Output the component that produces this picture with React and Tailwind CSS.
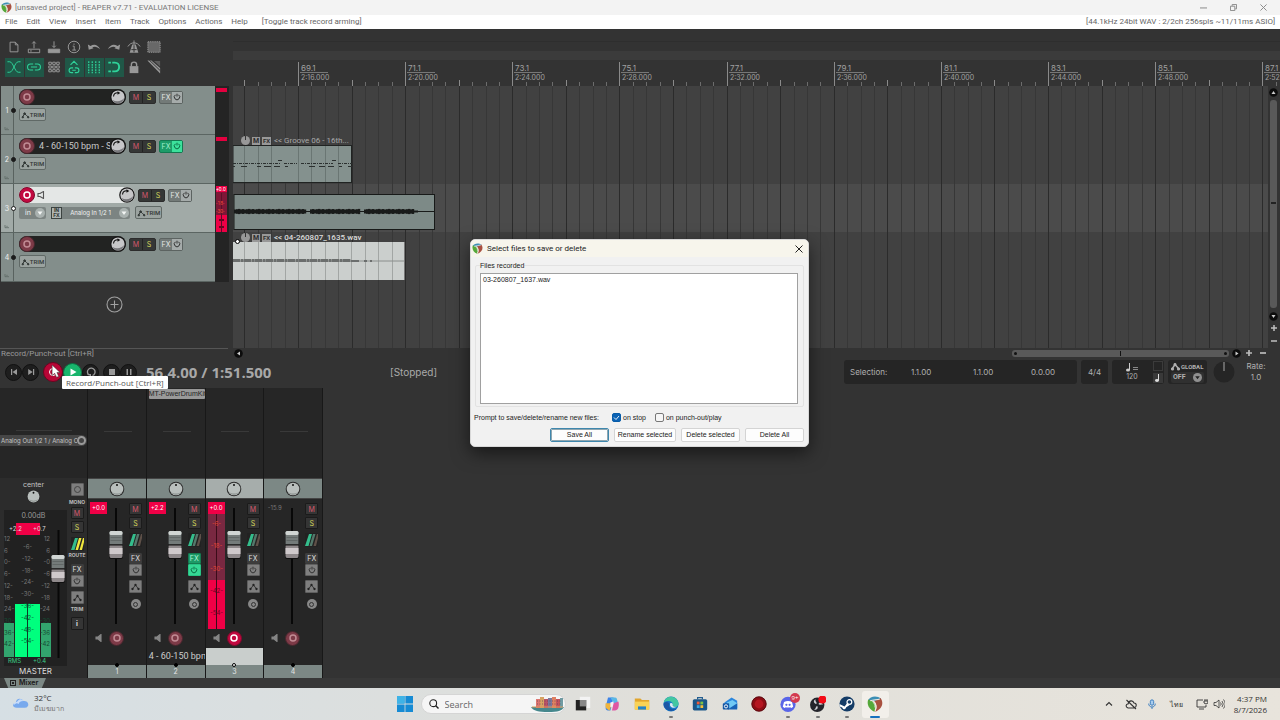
import React from "react";

const MAJORS = Array.from({ length: 10 }, (_, i) => ({
  x: Math.round(65 + i * 107.15),
  bar: `${69 + i * 2}.1`,
  time: `2:${String(16 + i * 4).padStart(2, "0")}.000`,
}));
const GRID = Array.from({ length: 88 }, (_, i) => ({
  x: Math.round(65 - 107.15 + i * 13.394),
  kind: i % 8 === 0 ? 2 : i % 4 === 0 ? 1 : 0,
}));

function ReaperLogo({ className }) {
  return (
    <svg viewBox="0 0 16 16" className={className} aria-hidden="true">
      <path d="M1 4.500C3 .2 10 -.8 14 2.800L10 5.500L4 5Z" fill="#3d8fb5" />
      <path d="M1.200 3.500C-.5 8.500 2 13.500 7.500 15.800L8.500 12C8.500 8.500 7 5.500 3.500 4.500Z" fill="#55a83a" />
      <path d="M13.500 2C17.500 7 14.500 13.500 8 15.800C10.500 12 10 8 7 5.500C9 4 12 4 13.500 2Z" fill="#a9503f" />
      <path d="M3.200 4.800C6.500 3.600 10 3.800 12.800 2.900M6.300 5C9.300 7.500 9.600 11.500 8 14.500" fill="none" stroke="#efe9e0" strokeWidth="1.100" />
      <path d="M5 5.200C7.200 7 8 9 7.900 11.500" fill="none" stroke="#d8e3d2" strokeWidth=".8" />
    </svg>
  );
}

function Glyph({ children, className = "size-4", box = 16 }) {
  return (
    <svg viewBox={`0 0 ${box} ${box}`} className={className} fill="none" stroke="currentColor" strokeWidth="1.1" aria-hidden="true">
      {children}
    </svg>
  );
}

const TOOLS = [
  ["New project", false, <path d="M3.500 2.500H9.500L12.500 5.500V13.500H3.500ZM9.500 2.500V5.500H12.500" />],
  ["Open project", false, <><path d="M1.500 10.500H14.500V14.500H1.500ZM8 9.500V2M6 4L8 1.800L10 4" /><path d="M3.500 12.500H5.500" /></>],
  ["Save project", false, <><path d="M1.500 10.500H14.500V14.500H1.500Z" fill="currentColor" /><path d="M8 1.500V8M6 6.500L8 8.700L10 6.500" /></>],
  ["Project settings", false, <><circle cx="8" cy="8" r="6.600" /><path d="M6.500 7H8.200V11.500M6 11.500H10.300M8 4V5.500" /></>],
  ["Undo", false, <path d="M1 5L2 11L7.500 9.500L6 8.500C9 6.800 12 8 15 10.500C12.500 5.300 8 4 4 6.900Z" fill="currentColor" stroke="none" />],
  ["Redo", false, <path d="M15 5L14 11L8.500 9.500L10 8.500C7 6.800 4 8 1 10.500C3.500 5.300 8 4 12 6.900Z" fill="currentColor" stroke="none" />],
  ["Metronome", false, <><path d="M6 5H10L13 14.500H3Z" fill="currentColor" stroke="none" /><path d="M8 6V14M5 11H11" stroke="#333" /><path d="M8 .5V5M1 7.500C3 4.500 5 3.300 8 3.300C11 3.300 13 4.500 15 7.500" /></>],
  ["Ripple editing", false, <rect x="1" y="2" width="14" height="12" fill="#686868" strokeDasharray="1.500 1" />],
  ["Auto crossfade", true, <path d="M.5 2H3C7 2 9 14 13 14H15.500M.5 14H3C7 14 9 2 13 2H15.500" />],
  ["Item grouping", true, <path d="M7 4.500H4C-.5 4.500 -.5 11.500 4 11.500H7M9 4.500H12C16.500 4.500 16.500 11.500 12 11.500H9M4.500 8H11.500" strokeWidth="1.200" />],
  ["Grid settings", false, <path d="M2 2.500H5V5H2ZM6.500 2.500H9.500V5H6.500ZM11 2.500H14V5H11ZM2 6.800H5V9.300H2ZM6.500 6.800H9.500V9.300H6.500ZM11 6.800H14V9.300H11ZM2 11H5V13.500H2ZM6.500 11H9.500V13.500H6.500ZM11 11H14V13.500H11Z" />],
  ["Envelope grouping", true, <path d="M4 5.500L8 1.500L12 5.500M7 9H5C1.500 9 1.500 14.500 5 14.500H7M9 9H11C14.500 9 14.500 14.500 11 14.500H9M6 11.700H10" strokeWidth="1.300" />],
  ["Show grid", true, <path d="M2 1.500V15M6 1.500V15M10 1.500V15M14 1.500V15" strokeWidth="1.400" strokeDasharray="2 1" />],
  ["Snap", true, <><path d="M6 3H9C15.500 3 15.500 13 9 13H6" strokeWidth="2.200" /><path d="M1.500 3H4.500M1.500 13H4.500" strokeWidth="2.200" /></>],
  ["Lock", false, <><rect x="3" y="7" width="10" height="8" fill="currentColor" stroke="none" /><path d="M5 7.500V5C5 1.500 11 1.500 11 5V7.500" strokeWidth="1.600" /></>],
  ["Edge grouping", false, <><path d="M.5 .5H5L15 9V15.500Z" fill="currentColor" stroke="none" /><path d="M2.500 0L15 12" stroke="#333" /><path d="M8 1H15V7.500Z" fill="currentColor" stroke="none" opacity=".4" /></>],
];

function Toolbar() {
  return (
    <div className="grid w-[164px] grid-cols-8 pt-2 pl-1">
      {TOOLS.map(([label, on, art]) => (
        <button key={label} type="button" aria-label={label} className="flex h-5 items-center justify-center">
          <span className={`flex h-[19px] w-[19px] items-center justify-center ${on ? "bg-[#205747] text-[#2fd39a]" : "text-[#989898]"}`}>
            <Glyph className="size-[14px]">{art}</Glyph>
          </span>
        </button>
      ))}
    </div>
  );
}

function RecordDot({ armed, className = "size-4" }) {
  return (
    <button type="button" aria-label="Record arm" className={`${className} flex shrink-0 items-center justify-center rounded-full border ${armed ? "border-[#7c0b2c] bg-[#c20840]" : "border-[#47262d] bg-[#7d3a47]"}`}>
      <svg viewBox="0 0 8 8" className="size-2" aria-hidden="true">
        <circle cx="4" cy="4" r="3" fill="none" stroke={armed ? "#fff" : "#c18b94"} strokeWidth="1.500" />
      </svg>
    </button>
  );
}

function Knob({ className = "size-4" }) {
  return (
    <svg viewBox="0 0 16 16" className={`${className} shrink-0`} role="img" aria-label="Pan">
      <circle cx="8" cy="8" r="7.800" fill="#161616" />
      <circle cx="8" cy="8" r="6.600" fill="#c6c6c8" />
      <path d="M2.500 11C5 16 13 15.500 14.300 9C12 12 7 13.500 2.500 11" fill="#77777b" />
      <path d="M3.500 7.500C3.800 5 5.500 3.700 8 3.800" fill="none" stroke="#111" strokeWidth="1.100" />
      <path d="M7.500 2.200L10.300 4L7.500 5.700Z" fill="#111" />
    </svg>
  );
}

function PanDial({ className = "size-4" }) {
  return (
    <svg viewBox="0 0 16 16" className={className} role="img" aria-label="Pan center">
      <circle cx="8" cy="8" r="7.300" fill="#2b2b2b" />
      <circle cx="8" cy="8" r="6.300" fill="#b9bfbd" />
      <path d="M3 11C6 13 10 13 13 11C11 14.500 5 14.500 3 11" fill="#8c9290" />
      <circle cx="8" cy="4" r="1" fill="#111" />
    </svg>
  );
}

function Power({ className = "size-2" }) {
  return (
    <Glyph className={className} box={8}>
      <path d="M2.500 1.800A2.700 2.700 0 1 0 5.500 1.800M4 .7V3.500" strokeWidth="1" />
    </Glyph>
  );
}

function TrimButton() {
  return (
    <button type="button" className="flex h-[13px] w-[27px] items-center justify-center rounded-[2px] border border-[#606966] bg-[#9aa29f] text-[#303634]">
      <Glyph className="h-2 w-[9px] shrink-0" box={9}><path d="M1 7L3.500 3L5.500 5L8 7" /><circle cx="3.500" cy="3" r="1" fill="currentColor" /><circle cx="1.500" cy="7" r=".8" fill="currentColor" /><circle cx="7.500" cy="7" r=".8" fill="currentColor" /></Glyph>
      <span className="font-['Roboto',sans-serif] text-[6px] leading-none font-medium">TRIM</span>
    </button>
  );
}

function TrackRow({ n, name, selected, fxOn }) {
  return (
    <div className={`flex h-[49px] border-b border-[#5b6562] ${selected ? "bg-[#a1aaa7]" : "bg-[#838e8b]"}`}>
      <div className="relative flex w-[13px] shrink-0 flex-col items-center justify-between border-r border-[#59625f] pt-[19px] pb-[3px]">
        <span className="text-[7px] leading-[11px] text-[#eef0ef]">{n}</span>
        <Glyph className="h-1 w-[6px] text-[#5b6562]" box={6}><path d="M0 0V4H6M2 2H4" /></Glyph>
        <span className={`absolute top-[22px] -right-[3px] size-[5px] rounded-full border border-[#1b1b1b] ${selected ? "bg-white" : "bg-[#1b1b1b]"}`} />
      </div>
      <div className="flex flex-col gap-[3px] pt-[3px] pl-[5px]">
        <div className="flex items-center gap-[3px]">
          <div className={`flex h-[16px] items-center rounded-full ${selected ? "w-[116px] bg-[#e4e7e6]" : "w-[107px] bg-[#222322]"}`}>
            <RecordDot armed={selected} />
            {selected && <Glyph className="ml-[2px] size-2 text-[#555]" box={8}><path d="M1 2.500H3L6.500 .5V7.500L3 5.500H1Z" /></Glyph>}
            <input aria-label={`Track ${n} name`} defaultValue={name} className={`min-w-0 flex-1 bg-transparent font-['Roboto',sans-serif] text-[9px] text-[#c8c8c8] outline-none ${selected ? "" : "pl-1"}`} />
            <Knob />
          </div>
          <div className="flex h-[13px] w-[27px] rounded-[2px] border border-[#2c2c2c] bg-[#353736] text-[7px] leading-[11px]">
            <button type="button" className="flex-1 border-r border-[#222] text-[#d5586c]">M</button>
            <button type="button" className="flex-1 text-[#d4d65a]">S</button>
          </div>
          <div className={`flex h-[13px] w-[24px] items-center rounded-[2px] border text-[7px] leading-[11px] ${fxOn ? "border-[#137951] bg-[#1d9c69] text-[#a1efcd]" : "border-[#5c6361] bg-[#737a78] text-[#e4e6e5]"}`}>
            <button type="button" className="flex-1">FX</button>
            <button type="button" aria-label="FX bypass" className={`flex h-full w-[10px] items-center justify-center ${fxOn ? "bg-[#3ce19c] text-[#0b6a42]" : "bg-[#a5abaa] text-[#333]"}`}><Power /></button>
          </div>
        </div>
        {selected ? (
          <div className="flex items-center gap-[5px]">
            <div className="flex h-[12px] w-[27px] items-center justify-between rounded-[2px] bg-[#7c8482] pr-px pl-[6px]">
              <button type="button" className="text-[7px] leading-none text-[#f0f2f1]">in</button>
              <Arrow />
            </div>
            <div className="flex h-[12px] w-[79px] items-center rounded-[2px] bg-[#7c8482] pr-px">
              <button type="button" className="h-full w-[11px] border border-[#3c4341] bg-[#adb4b2] text-[5px] leading-[5px] font-bold text-[#2c3230]">IN<br />FX</button>
              <button type="button" className="flex-1 text-[6px] leading-none text-[#f0f2f1]">Analog In 1/2 1</button>
              <Arrow />
            </div>
            <TrimButton />
          </div>
        ) : <TrimButton />}
      </div>
    </div>
  );
}

function Arrow() {
  return (
    <svg viewBox="0 0 10 10" className="size-[10px]" aria-hidden="true">
      <circle cx="5" cy="5" r="5" fill="#a9b1af" /><path d="M2.500 3.500H7.500L5 7Z" fill="#f4f6f5" />
    </svg>
  );
}

function Meters() {
  return (
    <div className="flex w-[14px] flex-col bg-[#242424]">
      {[1, 2, 3, 4].map((n) => (
        <div key={n} className="h-[49px] overflow-hidden pt-[2px] pl-px">
          {n < 3 && <div className="h-[4px] w-[11px] bg-[#e4003f]" />}
          {n === 3 && (
            <svg viewBox="0 0 11 46" className="h-[46px] w-[11px]" role="img" aria-label="Track 3 level">
              <rect width="11" height="46" fill="#7e1737" />
              <rect width="11" height="6" fill="#f00046" />
              <rect y="29" width="11" height="17" fill="#ee0046" />
              <path d="M5.500 7V46" stroke="#5b1029" />
              <g fontFamily="Roboto, sans-serif" fontSize="5"><text x="0" y="5" fill="#fff">+0.0</text><text x="0" y="19" fill="#ee4b36">-18-</text><text x="0" y="27" fill="#ee4b36">-30-</text></g>
              <path d="M3 34H8M3 41H8" stroke="#690522" strokeWidth="2" />
            </svg>
          )}
        </div>
      ))}
    </div>
  );
}

function ItemLabel({ children, bright }) {
  return (
    <div className={`flex items-center gap-[2px] pl-[8px] font-['Roboto',sans-serif] text-[8px] leading-[9px] whitespace-nowrap ${bright ? "font-medium text-[#dcdcdc]" : "text-[#a8a8a8]"}`}>
      <span className="flex size-[9px] justify-center rounded-full bg-[#989898]"><span className="h-1 w-px bg-[#333]" /></span>
      <span className="size-2 bg-[#989898] text-center text-[7px] leading-[8px] font-bold text-[#2c2c2c]">M</span>
      <span className="h-2 w-[9px] bg-[#989898] text-center text-[6px] leading-[8px] font-bold text-[#2c2c2c]">FX</span>
      <span className="ml-px">{children}</span>
    </div>
  );
}

const WAVE = Array.from({ length: 90 }, (_, i) => ({ x: i * 2, h: 4 + ((i * 7) % 5) * 0.3, gap: i === 36 || i === 37 || i === 63 || i === 64 }));

function Arrange() {
  return (
    <div className="relative min-w-0 flex-1 overflow-hidden bg-[#333]">
      <div className="flex h-full flex-col">
        <div className="mt-3 h-[10px] border-t border-[#2e2e2e]" />
        <div className="h-[9px] bg-[#3b3b3b]" />
        <svg className="h-[26px] w-full" role="img" aria-label="Timeline ruler">
          {GRID.map((g) => <path key={g.x} d={`M${g.x + 0.5} ${g.kind === 2 ? 2 : g.kind === 1 ? 20 : 22}V26`} stroke={g.kind ? "#8a8a8a" : "#6c6c6c"} />)}
          {MAJORS.map((m) => (
            <g key={m.x} fill="#a0a0a0" fontFamily="Inter, sans-serif">
              <text x={m.x + 3} y="11" fontSize="8">{m.bar}</text>
              <path d={`M${m.x + 2} 12.500h28`} stroke="#777" />
              <text x={m.x + 3} y="20" fontSize="7">{m.time}</text>
            </g>
          ))}
        </svg>
        <div className="relative mr-3 flex-1 overflow-hidden bg-[#414141]">
          <div className="absolute inset-x-0 top-[98px] h-[48px] bg-[#4b4b4b]" />
          <svg className="absolute inset-0 h-full w-full" aria-hidden="true">
            {GRID.map((g) => <path key={g.x} d={`M${g.x + 0.5} 0V400`} stroke={g.kind ? "#2b2b2b" : "#373737"} />)}
          </svg>
          <div className="absolute top-[50px] left-0 w-[119px]">
            <ItemLabel>&lt;&lt; Groove 06 - 16th...</ItemLabel>
            <svg viewBox="0 0 119 38" className="h-[38px] w-full" role="img" aria-label="MIDI item">
              <rect x="0" y=".5" width="118.500" height="37" fill="#84918e" stroke="#202322" />
              {[11, 25, 38, 65, 78, 92, 105].map((x) => <path key={x} d={`M${x + 0.5} 1V37`} stroke="#6a7673" />)}
              <path d="M0 18.500H47M51 18.500H64M68 18.500H100M105 18.500H119" stroke="#2b302f" strokeDasharray="3 1 1 1" />
              <path d="M0 21.500H2M8 21.500H14M24 21.500H28M31 21.500H38M41 21.500H47M52 21.500H55M76 21.500H82M86 21.500H92M95 21.500H101M106 21.500H109M115 21.500H119M45 15.500H49M99 15.500H103" stroke="#2b302f" />
            </svg>
          </div>
          <svg viewBox="0 0 202 36" className="absolute top-[108px] left-0 h-[36px] w-[202px]" role="img" aria-label="Recorded item">
            <rect x="1" y=".5" width="200.500" height="35" fill="#7d8a87" stroke="#181a19" />
            <path d="M1 17.500H201" stroke="#181a19" />
            {WAVE.map((w) => w.gap ? null : <rect key={w.x} x={w.x + 1} y={17.5 - w.h / 2} width="2.200" height={w.h} fill="#181a19" />)}
            <path d="M180 17.500H185" stroke="#181a19" strokeWidth="2" />
          </svg>
          <div className="absolute top-[147px] left-0 w-[172px]">
            <ItemLabel bright>&lt;&lt; 04-260807_1635.wav</ItemLabel>
            <svg viewBox="0 0 172 38" className="h-[38px] w-full" role="img" aria-label="Selected item">
              <rect width="172" height="38" fill="#cbcfcd" />
              {[11, 25, 38, 52, 65, 78, 92, 105, 118, 132, 145, 159].map((x) => <path key={x} d={`M${x + 0.5} 0V38`} stroke="#a2a6a4" />)}
              <path d="M0 19H172" stroke="#8a8e8c" />
              <path d="M0 18.500H118" stroke="#6b6e6d" strokeWidth="3" strokeDasharray="7 .6 3 .4" />
              <path d="M118 19H126M131 19H134M137 19H139" stroke="#6b6e6d" strokeWidth="2" />
              <path d="M171.500 0V38" stroke="#777" />
            </svg>
            <span className="absolute top-[6px] left-[2px] size-[5px] rounded-full border border-black bg-white" />
          </div>
        </div>
      </div>
      <div className="absolute top-[57px] right-0 bottom-0 flex w-[12px] flex-col items-center bg-[#333] pt-[2px] pr-px text-[#c0c0c0]">
        <RoundArrow d="M2.500 6H6.500L4.500 3Z" />
        <div className="mt-[3px] mb-1 h-[208px] w-[7px] rounded-[3px] bg-[#595959] pt-[102px]"><div className="mx-auto h-[2px] w-[5px] bg-[#222]" /></div>
        <RoundArrow d="M2.500 3H6.500L4.500 6Z" />
        <Glyph className="mt-[3px] size-2" box={8}><path d="M1 4H7M4 1V7" strokeWidth="1.500" /></Glyph>
        <Glyph className="mt-[5px] size-2" box={8}><path d="M1 4H7" strokeWidth="1.500" /></Glyph>
      </div>
    </div>
  );
}

function RoundArrow({ d }) {
  return (
    <svg viewBox="0 0 9 9" className="size-[9px] shrink-0" aria-hidden="true">
      <circle cx="4.500" cy="4.500" r="4.300" fill="#0c0c0c" /><path d={d} fill="#ccc" />
    </svg>
  );
}

function RoundButton({ label, className, children }) {
  return (
    <button type="button" aria-label={label} className={`flex shrink-0 items-center justify-center rounded-full border ${className}`}>
      <svg viewBox="0 0 10 10" className="size-[10px]" fill="currentColor" aria-hidden="true">{children}</svg>
    </button>
  );
}

const DARK = "size-[17px] border-[#111] bg-[#1e1e1e] text-[#999]";

function Transport() {
  return (
    <section aria-label="Transport" className="relative bg-[#333] pb-[2px] text-[#b0b0b0]">
      <div className="flex h-[10px] items-center">
        <div className="h-[11px] w-[228px] border-t border-[#555] pl-px font-['Roboto',sans-serif] text-[8px] leading-[10px] text-[#9a9a9a]">Record/Punch-out [Ctrl+R]</div>
        <div className="ml-[6px] flex flex-1 items-center pr-[13px]">
          <RoundArrow d="M6 2.500V6.500L3 4.500Z" />
          <div className="ml-auto flex h-[7px] w-[217px] items-center justify-between rounded-[3px] bg-[#595959] px-[2px]">
            <span className="size-[3px] rounded-full bg-[#111]" /><span className="h-[5px] w-px bg-[#111]" /><span className="size-[3px] rounded-full bg-[#111]" />
          </div>
          <span className="ml-[3px] flex items-center gap-[4px] text-[#bbb]">
            <RoundArrow d="M3.500 2.500V6.500L6.500 4.500Z" />
            <Glyph className="size-2" box={8}><path d="M1 4H7M4 1V7" strokeWidth="1.700" /></Glyph>
            <Glyph className="ml-[2px] size-2" box={8}><path d="M1 4H7" strokeWidth="1.700" /></Glyph>
          </span>
        </div>
      </div>
      <div className="flex h-[28px] items-center pr-[13px]">
        <div className="flex w-[140px] items-center pl-[5px]">
          <RoundButton label="Go to start" className={DARK}><path d="M2 2H3.200V8H2ZM8 2V8L3.500 5Z" /></RoundButton>
          <RoundButton label="Go to end" className={DARK}><path d="M7 2H8.200V8H7ZM2.200 2V8L6.700 5Z" /></RoundButton>
          <RoundButton label="Record" className="ml-[4px] size-[20px] border-[#6b0420] bg-[#b80636] text-white"><circle cx="5" cy="5" r="3.500" fill="none" stroke="#fff" /><circle cx="5" cy="5" r="1" /></RoundButton>
          <RoundButton label="Play" className="size-[19px] border-[#0d7143] bg-[#18b56c] text-white"><path d="M2.500 1.500V8.500L8.500 5Z" /></RoundButton>
          <RoundButton label="Repeat" className={DARK}><path d="M3 8A3.800 3.800 0 1 1 6.500 8.500" fill="none" stroke="currentColor" strokeWidth="1.300" /><path d="M1 7H5V9.500Z" /></RoundButton>
          <RoundButton label="Stop" className={`ml-[4px] ${DARK}`}><path d="M2 2H8V8H2Z" /></RoundButton>
          <RoundButton label="Pause" className={DARK}><path d="M2.500 2H4V8H2.500ZM6 2H7.500V8H6Z" /></RoundButton>
        </div>
        <output className="ml-[6px] w-[244px] font-['Open_Sans',sans-serif] text-[15px] leading-5 font-bold whitespace-nowrap text-[#a8a8a8]">56.4.00 / 1:51.500</output>
        <output className="font-['Inter',sans-serif] text-[10px] leading-4 text-[#aaa]">[Stopped]</output>
        <div className="ml-auto flex items-center gap-[4px] text-[8px]">
          <div className="flex h-6 w-[233px] items-center rounded-[3px] bg-[#252525] pl-[6px]">
            <span className="w-[57px]">Selection:</span>
            <input aria-label="Selection start" defaultValue="1.1.00" className="w-[62px] bg-transparent pl-1" />
            <input aria-label="Selection end" defaultValue="1.1.00" className="w-[62px] bg-transparent pl-1" />
            <input aria-label="Selection length" defaultValue="0.0.00" className="w-[45px] bg-transparent" />
          </div>
          <button type="button" className="h-6 w-[27px] rounded-[3px] bg-[#252525]">4/4</button>
          <div className="flex h-6 w-[52px] justify-between rounded-[3px] bg-[#252525] pl-[12px]">
            <label className="flex flex-col items-center justify-center text-[7px] leading-[10px]">
              <svg viewBox="0 0 16 9" className="h-[9px] w-4" aria-hidden="true"><ellipse cx="4" cy="7" rx="2" ry="1.500" fill="#ccc" /><path d="M5.500 7V0" stroke="#ccc" /><path d="M9 4.500H14M9 6.500H14" stroke="#888" /></svg>
              <input aria-label="Tempo" defaultValue="120" className="w-[16px] bg-transparent text-center" />
            </label>
            <div className="flex flex-col justify-between p-px">
              <span className="size-[10px] border border-[#3b3b3b]" />
              <span className="flex size-[10px] items-center justify-center bg-[#393939]"><svg viewBox="0 0 6 8" className="h-2 w-[6px]" aria-hidden="true"><ellipse cx="2" cy="6.500" rx="2" ry="1.400" fill="#ddd" /><path d="M3.500 6.500V0" stroke="#ddd" /></svg></span>
            </div>
          </div>
          <div className="flex h-6 w-[39px] flex-col justify-center rounded-[3px] bg-[#252525] px-[3px] font-['Roboto',sans-serif] text-[7px] leading-[11px] font-bold">
            <span className="flex items-center gap-px text-[6px]"><Glyph className="size-[9px] shrink-0" box={9}><path d="M1 7L4 2.500L8 7" strokeWidth="1.500" /><circle cx="1.500" cy="7" r="1" fill="currentColor" /><circle cx="4" cy="2.500" r="1" fill="currentColor" /><circle cx="7.500" cy="7" r="1" fill="currentColor" /></Glyph>GLOBAL</span>
            <button type="button" className="flex items-center justify-between rounded-[2px] bg-[#303030] px-[2px]">OFF<svg viewBox="0 0 10 10" className="size-[9px]" aria-hidden="true"><circle cx="5" cy="5" r="5" fill="#909090" /><path d="M2.500 3.500H7.500L5 7Z" fill="#222" /></svg></button>
          </div>
          <svg viewBox="0 0 22 22" className="ml-[2px] size-[22px]" role="img" aria-label="Playrate"><circle cx="11" cy="11" r="10.500" fill="#252525" /><path d="M11 1V10" stroke="#aaa" /></svg>
          <div className="ml-[6px] flex w-[22px] flex-col items-center leading-[11px]"><span>Rate:</span><span>1.0</span></div>
        </div>
      </div>
      <svg viewBox="0 0 12 16" className="absolute top-[17px] left-[51px] h-[14px] w-[11px]" aria-hidden="true"><path d="M1 0V12L4 9.500L6 14L8.500 13L6.500 8.500H10Z" fill="#fff" stroke="#333" strokeWidth=".6" /></svg>
      <div role="tooltip" className="absolute top-[28px] left-[62px] z-10 rounded-[1px] bg-white px-[4px] font-['Open_Sans',sans-serif] text-[8px] leading-[13px] whitespace-nowrap text-[#555]">Record/Punch-out [Ctrl+R]</div>
    </section>
  );
}

function Fader({ height, top, className }) {
  return (
    <svg viewBox={`0 0 16 ${height}`} className={className} role="img" aria-label="Volume fader">
      <path d={`M8 0V${height}`} stroke="#080808" strokeWidth="2" />
      <FaderCap x={1} y={top} />
    </svg>
  );
}

function FaderCap({ x, y }) {
  return (
    <g transform={`translate(${x} ${y})`}>
      <rect width="14" height="28" rx="2" fill="#101010" />
      <rect x=".5" width="13" height="14" rx="1.500" fill="#747b7a" />
      <rect x=".5" width="13" height="4" rx="1.500" fill="#d0d5d3" />
      <path d="M1.500 6.500H12.500M1.500 9.500H12.500" stroke="#616766" />
      <path d="M.5 14.500H13.500V25Q13.500 27 12 27H2Q.5 27 .5 25Z" fill="#8f898b" />
      <path d="M.5 17H13.500V23H.5Z" fill="#cfc9cb" />
      <path d="M1 13.500H13" stroke="#2a2a2a" />
    </g>
  );
}

const SMALL = "flex w-[13px] items-center justify-center rounded-[1px] border text-[7px] leading-none";

function RouteIcon({ bright }) {
  return (
    <svg viewBox="0 0 13 14" className="h-[14px] w-[13px]" role="img" aria-label="Route">
      <rect width="13" height="14" rx="1" fill="#222" />
      <path d="M0 13L4 1H7L3.500 13Z" fill="#34bd8c" /><path d="M4.500 13L8 1H10.500L7 13Z" fill={bright ? "#f1e83e" : "#53796b"} /><path d="M8.500 13L12 1H13V5L11 13Z" fill={bright ? "#f1e83e" : "#5e5048"} />
    </svg>
  );
}

function EnvButton() {
  return <button type="button" aria-label="Envelope" className={`${SMALL} h-[13px] border-[#606060] bg-[#7e7e7e] text-[#222]`}><Glyph className="size-[9px]" box={9}><path d="M1.500 7L4.500 3L7.500 7" strokeWidth=".8" /><circle cx="4.500" cy="3" r=".6" fill="currentColor" /><circle cx="1.500" cy="7" r=".6" fill="currentColor" /><circle cx="7.500" cy="7" r=".6" fill="currentColor" /></Glyph></button>;
}

function FxPair({ on }) {
  return (
    <div>
      <button type="button" className={`${SMALL} h-[11px] ${on ? "border-[#157a50] bg-[#1d9a67] text-[#b0f5d6]" : "border-[#3b3b3b] bg-[#3d3d3d] text-[#ddd]"}`}>FX</button>
      <button type="button" aria-label="FX bypass" className={`${SMALL} h-[12px] ${on ? "border-[#28c384] bg-[#35d895] text-[#0a6a42]" : "border-[#606060] bg-[#808080] text-[#333]"}`}><Power /></button>
    </div>
  );
}

function Strip({ n, name, peak, clip, selected, fxOn }) {
  return (
    <article aria-label={`Mixer track ${n}`} className="flex min-w-0 flex-col border-r border-[#181818] bg-[#262626]">
      <div className="h-[90px] pt-px pl-[2px]">
        <div className="h-[42px]">
          {n === 2 && <button type="button" className="block h-[10px] w-[56px] rounded-[1px] bg-[#999] font-['Liberation_Sans',sans-serif] text-[7px] leading-[10px] whitespace-nowrap text-[#242424]">MT-PowerDrumKit</button>}
        </div>
        <div className="mx-auto w-7 border-t border-[#393939]" />
      </div>
      <div className={`flex h-[21px] items-center justify-center border-y border-[#444] ${selected ? "bg-[#a6adab]" : "bg-[#7c8885]"}`}><PanDial /></div>
      <div className="flex h-[131px] pt-[3px] pl-[2px]">
        <div className="w-[18px]">
          <div className={`h-[12px] w-[17px] text-center text-[6px] leading-[12px] whitespace-nowrap ${clip ? "bg-[#f00046] text-white" : "text-[#777]"}`}>{peak}</div>
          {selected && (
            <svg viewBox="0 0 17 115" className="h-[115px] w-[17px]" role="img" aria-label="Level meter">
              <rect width="17" height="115" fill="#792841" /><rect y="66" width="17" height="49" fill="#f00046" />
              <path d="M8.500 0V115" stroke="#3b0c19" />
              <g fontFamily="Inter, sans-serif" fontSize="6" textAnchor="middle" fill="#e34633"><text x="8.500" y="12">-6-</text><text x="8.500" y="34">-18-</text><text x="8.500" y="57">-30-</text></g>
              <g fontFamily="Inter, sans-serif" fontSize="6" textAnchor="middle" fill="#690522"><text x="8.500" y="79">-42-</text><text x="8.500" y="101">-54-</text></g>
            </svg>
          )}
        </div>
        <Fader height={116} top={23} className="mt-[6px] h-[116px] w-4" />
        <div className="ml-[5px] flex flex-col items-center pt-px">
          <button type="button" className={`${SMALL} h-[12px] border-[#1b1b1b] bg-[#353535] text-[#d5586c]`}>M</button>
          <button type="button" className={`${SMALL} mt-[2px] h-[12px] border-[#1b1b1b] bg-[#353535] text-[#d4d65a]`}>S</button>
          <span className="mt-[4px] mb-[6px]"><RouteIcon /></span>
          <FxPair on={fxOn} />
          <span className="mt-[4px] mb-[6px]"><EnvButton /></span>
          <button type="button" aria-label="Phase" className="flex size-[10px] items-center justify-center rounded-full bg-[#888]"><span className="size-[5px] rounded-full border border-[#333]" /></button>
        </div>
      </div>
      <div className="flex h-[18px] items-center gap-[6px] pb-[2px] pl-[7px]">
        <Glyph className="size-2 text-[#858585]" box={8}><path d="M1 3H3L6 .5V7.500L3 5H1Z" fill="currentColor" /></Glyph>
        <RecordDot armed={selected} className="size-[15px]" />
      </div>
      <div className={`h-[17px] overflow-hidden pl-[2px] font-['Roboto',sans-serif] text-[9px] leading-[17px] whitespace-nowrap text-[#ccc] ${selected ? "bg-[#c9cecc]" : ""}`}>{name}</div>
      <div className="relative h-[13px] bg-[#7c8885] text-center text-[7px] leading-[13px] text-[#e4e6e5]">
        {n}
        <span className={`absolute -top-[2px] left-1/2 -ml-[2px] size-[4px] rounded-full border border-black ${selected ? "bg-white" : "bg-black"}`} />
      </div>
    </article>
  );
}

const LEFT_SCALE = ["12", "6", "0-", "6-", "12-", "18-", "24-", "30-", "36-", "42-"];
const MID_SCALE = ["-6-", "-12-", "-18-", "-24-", "-30-", "-36-", "-42-", "-48-", "-54-"];

function Master() {
  return (
    <article aria-label="Master track" className="flex w-[88px] shrink-0 flex-col border-r border-[#181818] bg-[#2c2c2c]">
      <div className="h-[90px] bg-[#262626] pt-[42px]">
        <div className="mb-[4px] ml-4 w-14 border-t border-[#393939]" />
        <div className="flex h-[11px] w-[87px] items-center overflow-hidden rounded-r-full bg-[#464646] text-[#c6c6c6]">
          <button type="button" className="flex-1 overflow-hidden pl-px text-left text-[6px] leading-[11px] whitespace-nowrap">Analog Out 1/2 1 / Analog C</button>
          <span className="mr-px size-[9px] shrink-0 rounded-full border-2 border-[#999] bg-[#444]" />
        </div>
      </div>
      <div className="flex">
        <div className="flex w-[67px] shrink-0 flex-col items-center">
          <span className="pt-[2px] text-[7px] leading-[9px] text-[#c4c4c4]">center</span>
          <PanDial className="size-[15px]" />
          <div className="mt-[6px] ml-[4px] flex w-[63px] flex-col bg-[#212121]">
            <span className="h-3 pr-1 text-center text-[7px] leading-3 text-[#999]">0.00dB</span>
            <svg viewBox="0 0 63 144" className="h-[144px] w-[63px]" role="img" aria-label="Master level">
              <rect x="12" y="1" width="24" height="12" fill="#f00046" />
              <g fontFamily="Inter, sans-serif" fontSize="6">
                <text x="5" y="9" fill="#ddd">+2.2</text><text x="29" y="9" fill="#ddd">+0.7</text>
                <rect x="0" y="101" width="10" height="34" fill="#32a56e" /><rect x="37" y="101" width="10" height="34" fill="#32a56e" />
                <rect x="11" y="82" width="25" height="53" fill="#00ff7e" /><path d="M23.500 82V135" stroke="#0c3c25" />
                <g fill="#777">
                  {LEFT_SCALE.map((t, i) => <text key={t + i} x="0" y={19 + i * 11.7} fill={i > 6 ? "#164b34" : "#777"}>{t}</text>)}
                  {LEFT_SCALE.map((t, i) => <text key={`r${i}`} x="46" y={19 + i * 11.7} textAnchor="end" fill={i > 6 ? "#164b34" : "#777"}>{i < 2 ? t : `-${t.replace("-", "")}`}</text>)}
                  {MID_SCALE.map((t, i) => <text key={t} x="23.500" y={27 + i * 11.8} textAnchor="middle" fill={i > 4 ? "#075c32" : "#777"}>{t}</text>)}
                </g>
                <text x="4" y="141" fill="#3ccb87">RMS</text><text x="29" y="141" fill="#3ccb87">+0.4</text>
              </g>
              <path d="M54.500 8V136" stroke="#080808" strokeWidth="2" />
              <FaderCap x={47} y={33} />
            </svg>
          </div>
          <span className="pl-1 text-[8px] leading-[11px] text-[#ddd]">MASTER</span>
        </div>
        <div className="flex flex-1 flex-col items-center pt-[5px] text-[6px] leading-[8px] text-[#bbb]">
          <button type="button" aria-label="Mono" className={`${SMALL} h-[13px] border-[#606060] bg-[#7e7e7e] text-[#333]`}><span className="size-[7px] rounded-full border border-[#444]" /></button>
          <span className="mt-[2px] text-[5px] font-bold">MONO</span>
          <button type="button" className={`${SMALL} mt-px h-[12px] border-[#1b1b1b] bg-[#353535] text-[#d5586c]`}>M</button>
          <button type="button" className={`${SMALL} mt-[2px] h-[12px] border-[#1b1b1b] bg-[#353535] text-[#d4d65a]`}>S</button>
          <span className="mt-[4px]"><RouteIcon bright /></span>
          <span className="mb-[5px] text-[5px] font-bold">ROUTE</span>
          <FxPair />
          <span className="mt-[4px]"><EnvButton /></span>
          <span className="mt-px text-[5px] font-bold">TRIM</span>
          <button type="button" className={`${SMALL} mt-[4px] h-[13px] border-[#1b1b1b] bg-[#353535] font-bold text-[#ddd]`}>i</button>
        </div>
      </div>
    </article>
  );
}

function SaveDialog() {
  const btn = "h-[14px] rounded-[2px] border bg-[#fdfdfd] text-[7px] leading-[12px] whitespace-nowrap";
  return (
    <div role="dialog" aria-labelledby="dlg-title" className="absolute top-[239px] left-[470px] z-20 flex w-[339px] flex-col overflow-hidden rounded-[5px] border border-[#d8d8d8] bg-[#f1f1f1] pb-[4px] text-[#222] shadow-[0_6px_18px_rgba(0,0,0,0.55)] font-['Liberation_Sans',sans-serif]">
      <header className="flex h-[17px] items-center gap-[4px] bg-[#f7f5ec] pr-[5px] pl-px">
        <ReaperLogo className="size-[11px]" />
        <h2 id="dlg-title" className="font-['Roboto',sans-serif] text-[8px] leading-4">Select files to save or delete</h2>
        <button type="button" aria-label="Close" className="ml-auto"><Glyph className="size-[8px]" box={8}><path d="M.5 .5L7.500 7.500M7.500 .5L.5 7.500" strokeWidth="1" /></Glyph></button>
      </header>
      <fieldset className="mx-[4px] mt-px h-[149px] rounded-[2px] border border-[#e2e2e2] pr-[5px] pl-[4px]">
        <legend className="text-[7px] leading-[15px]">Files recorded</legend>
        <ul role="listbox" aria-label="Files recorded" className="h-[131px] border border-[#a0a0a0] bg-white pl-[2px]">
          <li role="option" aria-selected="false" className="text-[7px] leading-[11px]">03-260807_1637.wav</li>
        </ul>
      </fieldset>
      <div className="flex h-[21px] items-center pl-[3px] text-[7px] whitespace-nowrap">
        <span className="w-[138px]">Prompt to save/delete/rename new files:</span>
        <label className="flex items-center gap-[2px]">
          <span className="relative flex size-[9px]"><input type="checkbox" defaultChecked className="size-[9px] appearance-none rounded-[2px] border border-[#075ca8] bg-[#0b62b4]" /><Glyph className="pointer-events-none absolute inset-0 size-[9px] text-white" box={9}><path d="M2 4.500L4 6.500L7 3" strokeWidth=".9" /></Glyph></span>
          on stop
        </label>
        <label className="ml-[9px] flex items-center gap-[2px]">
          <input type="checkbox" className="size-[9px] appearance-none rounded-[2px] border border-[#777] bg-[#f6f6f6]" />
          on punch-out/play
        </label>
      </div>
      <div className="flex justify-end gap-[5px] pr-[4px]">
        <button type="button" className={`${btn} w-[59px] border-[#3f87ad] outline outline-[#8fa6b0] -outline-offset-2`}>Save All</button>
        <button type="button" className={`${btn} w-[62px] border-[#d4d4d4]`}>Rename selected</button>
        <button type="button" className={`${btn} w-[59px] border-[#d4d4d4]`}>Delete selected</button>
        <button type="button" className={`${btn} w-[59px] border-[#d4d4d4]`}>Delete All</button>
      </div>
    </div>
  );
}

const APPS = [
  ["Task view", <><rect x="6" y="1" width="13" height="14" fill="#f3f3f3" /><rect x="1" y="5" width="13" height="13" fill="#222" /><rect x="6" y="5" width="8" height="8" fill="#888" /></>],
  ["Copilot", <><path d="M5 2H12L8 18H5C1 18 2 14 3 10Z" fill="#3c83e8" /><path d="M8 2H14C17 2 16 6 18 9H12Z" fill="#5ab8e6" /><path d="M2 9C1 15 3 16 7 18L10 9Z" fill="#f0b53d" /><path d="M10 18H14C19 18 19 10 18 7L12 9Z" fill="#df58a3" /><path d="M8 8L12 7L11 13L8 14Z" fill="#f7edf5" /></>],
  ["File Explorer", <><path d="M1 3H8L10 5H19V17H1Z" fill="#e2a52c" /><path d="M1 7H19V17H1Z" fill="#f9d255" /><path d="M5 13H15V17H5Z" fill="#2583c8" /></>],
  ["Edge", <><circle cx="10" cy="10" r="9.500" fill="#1878c8" /><path d="M1 8C3 -1 17 -2 19.500 9C19.500 14 14 15 12 12C14 7 7 4 1 8Z" fill="#43c7a1" /><path d="M8 10C6 15 12 17.500 17 16C11 22 -1 17 1 9C4 6.500 7 7 8 10" fill="#1b57a5" /><path d="M9 9C11 8 13 9.500 12 12C12.500 13.500 15 14 17 13.500C13 16 7.500 14 9 9" fill="#e0eaf0" /></>, true],
  ["Microsoft Store", <><path d="M7 4V2H13V4" fill="none" stroke="#255f91" strokeWidth="1.500" /><rect x="1" y="4" width="18" height="14" rx="2" fill="#1a5688" /><path d="M6 7H9.500V10.500H6Z" fill="#ef5b38" /><path d="M10.500 7H14V10.500H10.500Z" fill="#7dc144" /><path d="M6 11.500H9.500V15H6Z" fill="#38a8e2" /><path d="M10.500 11.500H14V15H10.500Z" fill="#f5c038" /></>],
  ["Outlook", <><path d="M3 8L12 2L19 6V15H4Z" fill="#2c87dd" /><path d="M6 8L13 5L19 9V16H7Z" fill="#70c9f5" /><path d="M7 17L19 9V17Z" fill="#1762b7" /><rect x="1" y="9" width="8" height="8" rx="1" fill="#1557a5" /><circle cx="5" cy="13" r="2" fill="none" stroke="#fff" strokeWidth="1.200" /></>],
  ["Red disc", <><circle cx="10" cy="10" r="9.300" fill="#8d0d15" /><circle cx="10" cy="10" r="5.500" fill="#b51621" /><circle cx="10" cy="10" r="9" fill="none" stroke="#4f0b10" /></>],
  ["Discord", <><circle cx="10" cy="10.500" r="9.500" fill="#5965e8" /><path d="M5 7.500Q10 5 15 7.500L16.500 13.500Q14 16 13 14Q10 15 7 14Q6 16 3.500 13.500Z" fill="#fff" /><circle cx="8" cy="11" r="1.400" fill="#5965e8" /><circle cx="12" cy="11" r="1.400" fill="#5965e8" /></>, true, "9+"],
  ["OBS Studio", <><circle cx="9" cy="11" r="9" fill="#24242a" /><path d="M8 10C4 9 4 5 7 4C6 7 9 7 8 10M10.500 10C12 6.500 16 8 16 11C13.500 9.500 12.500 12 10.500 10M9 12.500C11 15.500 8 18 5 17C8 16 6.500 13.500 9 12.500" fill="#cfcfd3" /><circle cx="15.500" cy="4.500" r="5" fill="#f30b16" /></>, true],
  ["Steam", <><circle cx="10" cy="10" r="9.500" fill="#143c67" /><circle cx="13" cy="7.500" r="3" fill="none" stroke="#fff" strokeWidth="1.500" /><path d="M.5 10L7 13L10.500 8.500L13 11.500L9 14C8 17.500 5 17.500 4 14.500L1 13Z" fill="#fff" /></>, true],
];

function Taskbar() {
  return (
    <footer className="grid h-8 grid-cols-[1fr_auto_1fr] items-center bg-linear-to-r from-[#d6dfe4] via-[#e0dfda] to-[#e8e4dc] font-['Open_Sans','Noto_Sans',sans-serif] text-[#333]">
      <button type="button" className="flex items-center gap-[5px] pb-[2px] pl-3 text-left">
        <svg viewBox="0 0 18 14" className="h-[14px] w-[17px]" aria-hidden="true"><path d="M5 12C0 12 0 7 4 7C4 2 10 1 12 5C16 4 18 8 17 10C16 12 15 12 14 12Z" fill="#78a9ed" /><path d="M6 5C8 2 11 3 12 5C9 5 8 6 7 8C5 6 3 8 2 9C1 7 4 7 6 5" fill="#c7dcfa" /></svg>
        <span className="flex flex-col text-[8px] leading-[11px]"><span>32°C</span><span className="text-[7px] text-[#777]">มีเมฆมาก</span></span>
      </button>
      <nav aria-label="Taskbar apps" className="flex items-center pl-[5px]">
        <button type="button" aria-label="Start" className="mr-[8px]">
          <svg viewBox="0 0 16 16" className="size-4" aria-hidden="true"><path d="M0 0H7.600V7.600H0ZM8.400 0H16V7.600H8.400ZM0 8.400H7.600V16H0ZM8.400 8.400H16V16H8.400Z" fill="#168bd4" /><path d="M0 0H7.600V7.600H0Z" fill="#3fb3e6" /></svg>
        </button>
        <label className="mr-[3px] flex h-5 w-[145px] items-center rounded-full border border-[#d5d5d5] bg-[#f5f5f5] pl-[7px]">
          <Glyph className="size-[10px] shrink-0 text-[#222]" box={10}><circle cx="4.200" cy="4.200" r="3.400" /><path d="M6.800 6.800L9.500 9.500" strokeWidth="1.400" /></Glyph>
          <input aria-label="Search" placeholder="Search" className="ml-[6px] w-0 min-w-0 flex-1 bg-transparent text-[9px] placeholder:text-[#666] outline-none" />
          <svg viewBox="0 0 34 18" className="h-[18px] w-[34px] shrink-0" aria-hidden="true">
            <path d="M0 12H33C31 16 27 17 17 17C8 17 2 16 0 12Z" fill="#46888d" />
            <path d="M5 4H9V13H5Z" fill="#de7772" /><path d="M9 2H13V13H9Z" fill="#d7a363" /><path d="M13 4H17V13H13Z" fill="#b95367" /><path d="M17 3H21V13H17Z" fill="#7c779c" /><path d="M21 2H25V13H21Z" fill="#df8061" /><path d="M25 4H29V13H25Z" fill="#c5525b" /><path d="M29 3H32V13H29Z" fill="#709ba2" />
            <path d="M6 6H31M6 9H31" stroke="#593f55" strokeWidth=".7" strokeDasharray="1 1.500" /><path d="M1 12H32" stroke="#d8995c" />
          </svg>
        </label>
        <div className="grid w-[293px] grid-cols-10">
          {APPS.map(([label, art, running, badge]) => (
            <button key={label} type="button" aria-label={label} className="relative flex h-8 items-center justify-center">
              <svg viewBox="0 0 20 20" className="size-4" aria-hidden="true">{art}</svg>
              {running && <span className="absolute bottom-[2px] h-[2px] w-1 rounded-full bg-[#777]" />}
              {badge && <span className="absolute top-[5px] right-[3px] size-[10px] rounded-full bg-[#d33a50] text-center text-[6px] leading-[10px] text-white">{badge}</span>}
            </button>
          ))}
        </div>
        <button type="button" aria-label="REAPER" className="relative flex h-[27px] w-[27px] items-center justify-center rounded-[3px] bg-[#f2efea]">
          <ReaperLogo className="size-4" /><span className="absolute bottom-0 h-[2px] w-[10px] rounded-full bg-[#1570be]" />
        </button>
      </nav>
      <div className="flex items-center justify-end pr-[13px] text-[8px]">
        <Glyph className="mr-[12px] size-2" box={8}><path d="M1 5.500L4 2.500L7 5.500" /></Glyph>
        <Glyph className="mr-[10px] h-3 w-3" box={12}><path d="M3 10C0 9 1 6 3 6C4 2 8 2 9 5C12 5 12 9 9 10ZM1.500 2L11 11" /></Glyph>
        <Glyph className="mr-[13px] h-3 w-[10px] text-[#3378bd]" box={12}><rect x="4" y="1" width="4" height="6.500" rx="2" fill="#a9cdee" /><path d="M2 5.500C2 11 10 11 10 5.500M6 9.500V12" /></Glyph>
        <span className="mr-[13px] text-[7px]">ไทย</span>
        <Glyph className="mr-[5px] h-3 w-3" box={12}><path d="M7 2H1V9H10V7M3 11H8M9 1V3M11 1V3M8 3H12V5Q10 7 8 5Z" strokeWidth=".9" /></Glyph>
        <Glyph className="mr-[9px] h-3 w-3" box={12}><path d="M1 4.500H3L6 2V10L3 7.500H1ZM7.500 4.500Q9 6 7.500 7.500M9 3Q11.500 6 9 9M10.500 1.500Q14 6 10.500 10.500" strokeWidth=".8" /></Glyph>
        <time className="flex flex-col text-right leading-[11px]"><span>4:37 PM</span><span>8/7/2026</span></time>
      </div>
    </footer>
  );
}

export default function App() {
  return (
    <div className="relative flex min-h-screen w-full flex-col overflow-hidden bg-[#333] font-['Inter','Liberation_Sans',sans-serif] leading-none">
      <header className="flex h-[15px] items-center gap-[3px] bg-[#f3f3f3] pr-[13px] pl-px font-['Roboto',sans-serif] text-[#777]">
        <ReaperLogo className="size-[11px]" />
        <h1 className="text-[8px]">[unsaved project] - REAPER v7.71 - EVALUATION LICENSE</h1>
        <div className="ml-auto flex gap-[23px] text-[#888]">
          <button type="button" aria-label="Minimize"><Glyph className="size-[7px]" box={8}><path d="M0 4.500H8" /></Glyph></button>
          <button type="button" aria-label="Restore"><Glyph className="size-[7px]" box={8}><path d="M.5 2.500H5.500V7.500H.5ZM2.500 2V.5H7.500V5.500H6" /></Glyph></button>
          <button type="button" aria-label="Close"><Glyph className="size-[7px]" box={8}><path d="M.5 .5L7.500 7.500M7.500 .5L.5 7.500" /></Glyph></button>
        </div>
      </header>
      <nav aria-label="Menu" className="flex h-[14px] items-center gap-[9px] bg-white px-[5px] font-['Roboto',sans-serif] text-[8px] text-[#666]">
        {["File", "Edit", "View", "Insert", "Item", "Track", "Options", "Actions", "Help"].map((m) => <button type="button" key={m}>{m}</button>)}
        <span className="ml-[5px]">[Toggle track record arming]</span>
        <span className="ml-auto">[44.1kHz 24bit WAV : 2/2ch 256spls ~11/11ms ASIO]</span>
      </nav>
      <main className="flex flex-1 flex-col">
        <section aria-label="Arrange view" className="flex h-[319px]">
          <div className="flex w-[233px] shrink-0 flex-col bg-[#333]">
            <div className="h-[57px]"><Toolbar /></div>
            <div className="flex pl-px">
              <div className="w-[214px]">
                <TrackRow n={1} name="" />
                <TrackRow n={2} name="4 - 60-150 bpm - S" fxOn />
                <TrackRow n={3} name="" selected />
                <TrackRow n={4} name="" />
              </div>
              <Meters />
            </div>
            <button type="button" aria-label="Add track" className="mx-auto mt-[14px] pr-1 text-[#a0a0a0]"><Glyph className="size-[17px]" box={17}><circle cx="8.500" cy="8.500" r="7.500" /><path d="M4.500 8.500H12.500M8.500 4.500V12.500" /></Glyph></button>
          </div>
          <Arrange />
        </section>
        <Transport />
        <section aria-label="Mixer" className="flex flex-1">
          <Master />
          <div className="grid w-[235px] grid-cols-4">
            <Strip n={1} peak="+0.0" clip />
            <Strip n={2} peak="+2.2" clip fxOn name="4 - 60-150 bpm" />
            <Strip n={3} peak="+0.0" clip selected />
            <Strip n={4} peak="-15.9" />
          </div>
        </section>
        <div className="flex h-[10px] bg-[#383838] pl-1">
          <button type="button" className="flex w-[42px] items-center gap-[3px] bg-[#7c8885] pl-[6px] text-[7px] leading-[10px] font-bold text-[#222] [clip-path:polygon(0_0,100%_0,90%_100%,10%_100%)]"><span className="flex size-[6px] items-center justify-center border border-[#222]"><span className="size-[2px] bg-[#222]" /></span>Mixer</button>
        </div>
      </main>
      <Taskbar />
      <SaveDialog />
    </div>
  );
}
